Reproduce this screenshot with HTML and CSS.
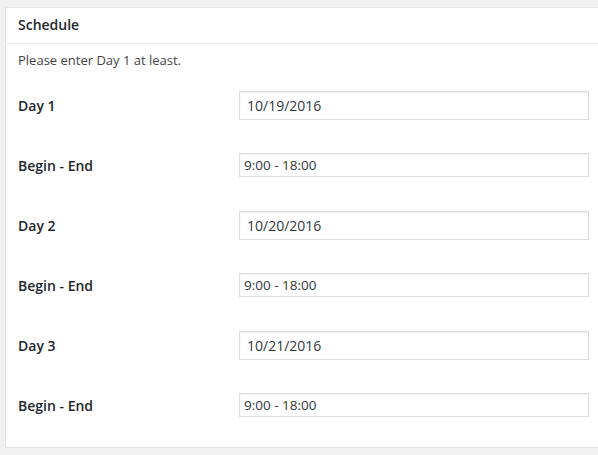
FILE: index.html
```html
<!DOCTYPE html>
<html lang="en">
  <head>
    <meta charset="UTF-8" />
    <meta name="viewport" content="width=device-width, initial-scale=1.0" />
    <title>Schedule</title>
    <link rel="stylesheet" href="styles.css">
  </head>
  <body>
    <div class="postbox">
      <h2 class="hndle">Schedule</h2>
      <div class="inside">
        <p class="note">Please enter Day 1 at least.</p>
        <div class="row">
          <label for="day1">Day 1</label>
          <input type="text" id="day1" class="date" value="10/19/2016" />
        </div>
        <div class="row">
          <label for="time1">Begin - End</label>
          <input type="text" id="time1" class="time" value="9:00 - 18:00" />
        </div>
        <div class="row">
          <label for="day2">Day 2</label>
          <input type="text" id="day2" class="date" value="10/20/2016" />
        </div>
        <div class="row">
          <label for="time2">Begin - End</label>
          <input type="text" id="time2" class="time" value="9:00 - 18:00" />
        </div>
        <div class="row">
          <label for="day3">Day 3</label>
          <input type="text" id="day3" class="date" value="10/21/2016" />
        </div>
        <div class="row">
          <label for="time3">Begin - End</label>
          <input type="text" id="time3" class="time" value="9:00 - 18:00" />
        </div>
      </div>
    </div>
  </body>
</html>
```

FILE: styles.css
```css
body {
  font-family: "Open Sans", "Noto Sans", sans-serif;
  margin: 0;
  padding: 7px 0 0 5px;
  background-color: #f1f1f1;
  color: #23282d;
  overflow: hidden;
}
.postbox {
  width: 600px;
  background: white;
  border: 1px solid #e5e5e5;
  box-shadow: 0 1px 1px rgba(0, 0, 0, 0.04);
}
.hndle {
  margin: 0;
  padding: 0 12px;
  height: 35px;
  line-height: 34px;
  font-size: 14px;
  font-weight: 600;
  border-bottom: 1px solid #eee;
}
.inside {
  padding: 0 12px 12px;
}
.note {
  margin: 0;
  height: 31px;
  line-height: 32px;
  font-size: 13px;
  color: #444;
}
.row {
  display: flex;
  align-items: center;
  height: 60px;
}
.row label {
  width: 221px;
  font-size: 14px;
  font-weight: 600;
}
.row input {
  box-sizing: border-box;
  width: 350px;
  margin: 0;
  border: 1px solid #ddd;
  box-shadow: inset 0 1px 2px rgba(0, 0, 0, 0.07);
  background: white;
  color: #32373c;
  font-family: "Open Sans", sans-serif;
  outline: none;
}
.row input.date {
  height: 29px;
  padding: 0 7px;
  font-size: 14px;
}
.row input.time {
  height: 24px;
  padding: 0 4px;
  font-size: 13.5px;
}
```
